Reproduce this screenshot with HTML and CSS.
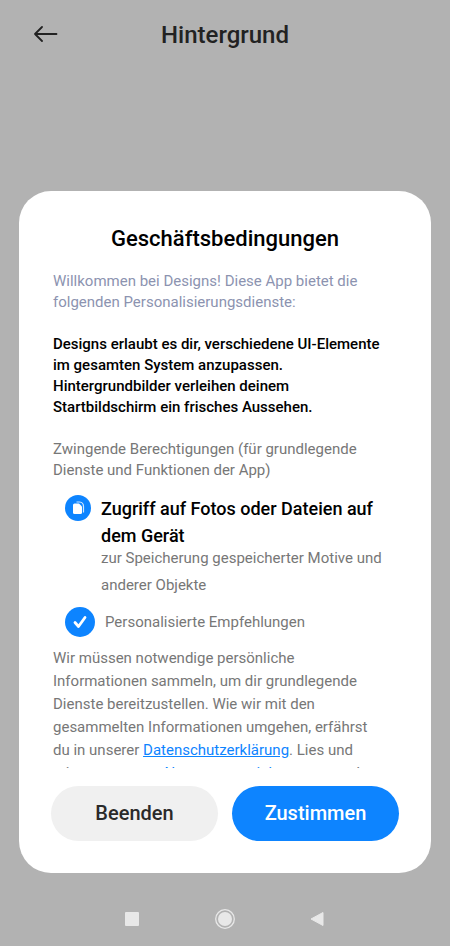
FILE: index.html
```html
<!DOCTYPE html>
<html lang="de">
<head>
<meta charset="utf-8">
<meta name="viewport" content="width=device-width, initial-scale=1">
<title>Hintergrund</title>
<link rel="stylesheet" href="styles.css">
</head>
<body>
<header class="topbar">
  <button class="back" type="button" aria-label="Zurück">
    <svg width="26" height="18" viewBox="0 0 26 18" fill="none" stroke="#222" stroke-width="1.800" stroke-linecap="round" stroke-linejoin="round"><path d="M24.500 8H3M10 1L3 8l7 7"/></svg>
  </button>
  <h1 class="topbar-title">Hintergrund</h1>
</header>
<main class="dialog" role="dialog" aria-labelledby="dialog-title">
  <h2 class="dialog-title" id="dialog-title">Geschäftsbedingungen</h2>
  <div class="terms">
    <p class="intro">Willkommen bei Designs! Diese App bietet die folgenden Personalisierungsdienste:</p>
    <p class="summary">Designs erlaubt es dir, verschiedene UI-Elemente im gesamten System anzupassen.<br>Hintergrundbilder verleihen deinem Startbildschirm ein frisches Aussehen.</p>
    <p class="group">Zwingende Berechtigungen (für grundlegende Dienste und Funktionen der App)</p>
    <section class="permission">
      <svg class="permission-icon" width="26" height="26" viewBox="0 0 26 26">
        <circle cx="13" cy="13" r="13" fill="#0d84ff"/>
        <path d="M11.500 7h3q4 .3 4 4.500v6" fill="none" stroke="#cfe6ff" stroke-width="1.200"/>
        <path d="M9.500 8.500h4.500l3 3v6q0 1.500-1.500 1.500h-6q-1.500 0-1.500-1.500v-7.500q0-1.500 1.500-1.500z" fill="#fff"/>
      </svg>
      <div>
        <h3 class="permission-title">Zugriff auf Fotos oder Dateien auf dem Gerät</h3>
        <p class="permission-text">zur Speicherung gespeicherter Motive und anderer Objekte</p>
      </div>
    </section>
    <label class="option">
      <span class="option-box">
        <input class="option-input" type="checkbox" checked>
        <svg class="option-mark" width="30" height="30" viewBox="0 0 30 30" fill="none" stroke="#fff" stroke-width="2.800" stroke-linecap="round" stroke-linejoin="round"><path d="M10 15.500l3.500 4L20 10.500"/></svg>
      </span>
      <span>Personalisierte Empfehlungen</span>
    </label>
    <p class="privacy">Wir müssen notwendige persönliche Informationen sammeln, um dir grundlegende Dienste bereitzustellen. Wie wir mit den gesammelten Informationen umgehen, erfährst du in unserer <a href="#datenschutz">Datenschutzerklärung</a>. Lies und stimme unseren <a href="#nutzung">Nutzungsvereinbarungen</a> und</p>
  </div>
  <div class="actions">
    <button class="btn" type="button">Beenden</button>
    <button class="btn btn-primary" type="button">Zustimmen</button>
  </div>
</main>
<nav class="navbar" aria-label="Systemnavigation">
  <button type="button" aria-label="Übersicht"><svg width="22" height="22" viewBox="0 0 22 22"><rect x="4" y="4" width="14" height="14" rx="1" fill="#e8e8e8"/></svg></button>
  <button type="button" aria-label="Startseite"><svg width="22" height="22" viewBox="0 0 22 22"><circle cx="11" cy="11" r="9.300" fill="none" stroke="#e8e8e8" stroke-width="1.300"/><circle cx="11" cy="11" r="7" fill="#e8e8e8"/></svg></button>
  <button type="button" aria-label="Zurück"><svg width="22" height="22" viewBox="0 0 22 22"><path d="M4 11L16 4.500v13z" fill="#e8e8e8" stroke="#e8e8e8" stroke-linejoin="round"/></svg></button>
</nav>
</body>
</html>
```
FILE: styles.css
```css
* {
  box-sizing: border-box;
  margin: 0;
  padding: 0;
}

body {
  display: flex;
  flex-direction: column;
  min-height: 100vh;
  background: #b2b2b2;
  color: #777;
  font: 400 15px/21px Roboto, "Liberation Sans", sans-serif;
}

button {
  border: 0;
  background: none;
  font: inherit;
  cursor: pointer;
}

svg {
  display: block;
}

.topbar {
  display: grid;
  grid-template-columns: 26px 1fr 26px;
  align-items: center;
  padding: 19px 32px 0;
}

.topbar-title {
  color: #222;
  font-size: 24px;
  font-weight: 500;
  line-height: 32px;
  text-align: center;
}

.dialog {
  margin: auto 19px 0;
  padding: 32px;
  border-radius: 32px;
  background: #fff;
}

.dialog-title {
  margin-bottom: 16px;
  color: #000;
  font-size: 22px;
  font-weight: 500;
  line-height: 32px;
  text-align: center;
}

.terms {
  max-height: 497px;
  padding: 0 12px 0 2px;
  overflow: hidden;
}

.intro {
  color: #8c93b0;
}

.summary {
  margin: 21px 0;
  color: #000;
  font-weight: 500;
}

.permission {
  display: flex;
  gap: 10px;
  margin: 14px 0 8px 12px;
  line-height: 27px;
}

.permission-icon {
  flex: none;
}

.permission-title {
  color: #000;
  font-size: 18px;
  font-weight: 500;
}

.permission-text {
  margin-top: -4px;
}

.option {
  display: flex;
  align-items: center;
  gap: 10px;
  margin-left: 12px;
}

.option-box {
  position: relative;
}

.option-input {
  display: block;
  width: 30px;
  height: 30px;
  border-radius: 50%;
  background: #ddd;
  appearance: none;
}

.option-input:checked {
  background: #0d84ff;
}

.option-mark {
  position: absolute;
  inset: 0;
  pointer-events: none;
}

.privacy {
  margin-top: 10px;
  line-height: 23px;
}

.privacy a {
  color: #0d84ff;
}

.actions {
  display: flex;
  gap: 14px;
  margin-top: 18px;
}

.btn {
  flex: 1;
  height: 55px;
  border-radius: 28px;
  background: #f0f0f0;
  color: #2a2a2a;
  font-size: 20px;
  font-weight: 500;
}

.btn-primary {
  background: #0d84ff;
  color: #fff;
}

.navbar {
  display: flex;
  justify-content: center;
  gap: 71px;
  padding: 35px 0 16px;
}
```
